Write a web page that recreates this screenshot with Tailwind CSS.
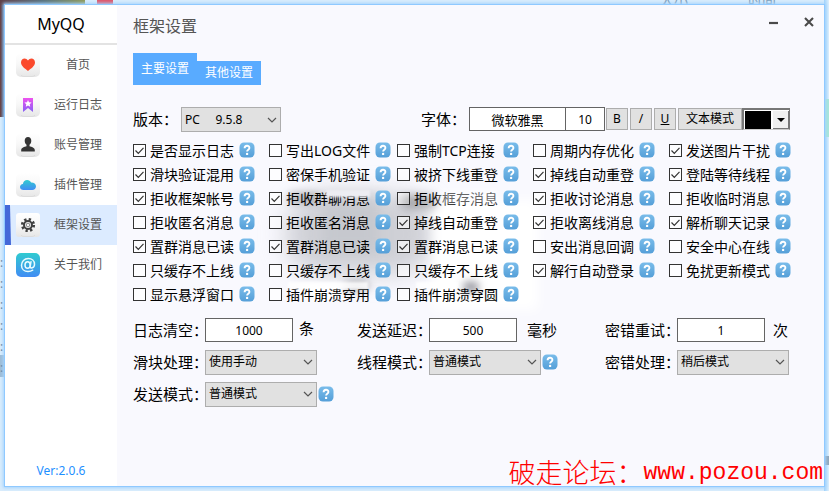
<!DOCTYPE html>
<html lang="zh-CN">
<head>
<meta charset="utf-8">
<title>MyQQ 框架设置</title>
<script src="https://cdn.jsdelivr.net/npm/@tailwindcss/browser@4"></script>
</head>
<body class="relative flex min-h-screen overflow-hidden bg-[#d9ecfc] p-[5px] font-['Noto_Sans','Noto_Sans_CJK_SC',sans-serif] text-black">

<!-- Desktop behind the window -->
<div class="absolute inset-0 overflow-hidden" aria-hidden="true">
  <div class="absolute top-0 left-0 h-[117px] w-[5px] bg-gradient-to-r from-[#6b3a38] to-[#2f5684]"></div>
  <div class="absolute top-0 left-0 h-[5px] w-[85px] bg-gradient-to-r from-[#5e3f48] via-[#56707c] to-[#8f9a58]"></div>
  <div class="absolute top-0 left-[97px] h-1 w-4 bg-[#e0566a]"></div>
  <div class="absolute top-0 right-0 bottom-0 w-[5px] bg-gradient-to-r from-[#9fd2fb] to-[#dff0fd]"></div>
  <div class="absolute right-0 top-[99px] h-[38px] w-1 bg-[#a8e6d8]"></div>
  <div class="absolute right-0 top-[456px] h-[9px] w-[5px] bg-[#8ea5ba]"></div>
  <div class="absolute left-0 top-[355px] h-[22px] w-[5px] bg-[#9dbcd6]"></div>
  <div class="absolute -top-2 left-[660px] text-[14px] leading-4 text-[#7c9db8]">大小</div>
  <div class="absolute -top-2 left-[748px] text-[14px] leading-4 text-[#7c9db8]">时间</div>
  <div class="absolute top-[252px] left-0 text-[12px] leading-[21px] text-[#5f7c98]">:<br>:<br>:<br>:<br>:<br>:</div>
</div>

<div class="relative flex flex-1 bg-[#f9f9fe] shadow-[0_0_0_1px_#8fc9ff,0_0_3px_2px_#a5d4fd]">

  <!-- Sidebar -->
  <aside class="flex w-28 shrink-0 flex-col bg-white">
    <h1 class="flex h-10 items-center justify-center border-b-2 border-[#e3e3e3] text-[16px]">MyQQ</h1>
    <nav class="flex flex-col text-[12px] text-[#555]">
      <a href="#" class="flex h-10 items-center gap-3.5 pl-[11px]">
        <svg class="size-6" viewBox="0 0 24 24"><defs><linearGradient id="tile" x2="0" y2="1"><stop stop-color="#fff"/><stop offset=".45" stop-color="#f8f8f8"/><stop offset="1" stop-color="#e6e6e6"/></linearGradient></defs><rect width="24" height="24" rx="5" fill="url(#tile)"/><path d="M5 22q1 1.500 3 1.500h8q2 0 3-1.500" fill="none" stroke="#dcdcdc"/><path d="M12 18C9 15.500 5 13 5 9.500 5 5 10 4 12 7.500 14 4 19 5 19 9.500 19 13 15 15.500 12 18z" fill="#fb4a2d"/></svg>
        <span class="w-12 text-center">首页</span>
      </a>
      <a href="#" class="flex h-10 items-center gap-3.5 pl-[11px]">
        <svg class="size-6" viewBox="0 0 24 24"><defs><linearGradient id="mark" x2="0" y2="1"><stop stop-color="#ee52ee"/><stop offset="1" stop-color="#8560f6"/></linearGradient></defs><rect width="24" height="24" rx="5" fill="url(#tile)"/><path d="M5 22q1 1.500 3 1.500h8q2 0 3-1.500" fill="none" stroke="#dcdcdc"/><path d="M7 5h10v14l-5-4-5 4z" fill="url(#mark)"/><path d="m12 7 1 2.300 2.600.3-1.900 1.700.5 2.500-2.200-1.300-2.200 1.300.5-2.500-1.900-1.700 2.600-.3z" fill="#fff"/></svg>
        <span class="w-12 text-center">运行日志</span>
      </a>
      <a href="#" class="flex h-10 items-center gap-3.5 pl-[11px]">
        <svg class="size-6" viewBox="0 0 24 24"><rect width="24" height="24" rx="5" fill="url(#tile)"/><path d="M5 22q1 1.500 3 1.500h8q2 0 3-1.500" fill="none" stroke="#dcdcdc"/><path d="M12 4c2 0 3.300 1.500 3.300 3.800 0 1.800-.8 3.200-1.800 4v1.400c2 .8 5.300 1.200 5.300 3.800v1.500H5.200V17c0-2.600 3.300-3 5.300-3.800v-1.400c-1-.8-1.800-2.200-1.800-4C8.700 5.500 10 4 12 4z" fill="#343434"/></svg>
        <span class="w-12 text-center">账号管理</span>
      </a>
      <a href="#" class="flex h-10 items-center gap-3.5 pl-[11px]">
        <svg class="size-6" viewBox="0 0 24 24"><defs><linearGradient id="blue" x2="0" y2="1"><stop stop-color="#30cbd0"/><stop offset="1" stop-color="#418cf4"/></linearGradient></defs><rect width="24" height="24" rx="5" fill="url(#tile)"/><path d="M5 22q1 1.500 3 1.500h8q2 0 3-1.500" fill="none" stroke="#dcdcdc"/><path d="M7.500 17C5.500 17 4 15.700 4 14c0-1.600 1.200-2.800 2.900-3C7.300 8.600 9 7 11.200 7c1.700 0 3.200 1 3.900 2.400 2.600-.2 4.900 1.400 4.900 3.900 0 2.100-1.600 3.700-3.800 3.700z" fill="url(#blue)"/></svg>
        <span class="w-12 text-center">插件管理</span>
      </a>
      <a href="#" aria-current="page" class="relative flex h-10 items-center gap-3.5 bg-[#dcebff] pl-[11px]">
        <svg class="absolute inset-y-0 left-0 h-10 w-1.5" viewBox="0 0 6 40"><path d="M0 0h5l1 40H0z" fill="#4468d8"/></svg>
        <svg class="size-6" viewBox="0 0 24 24"><rect width="24" height="24" rx="3" fill="url(#tile)"/><path d="M5 22q1 1.500 3 1.500h8q2 0 3-1.500" fill="none" stroke="#dcdcdc"/><g fill="none" stroke="#414141"><circle cx="12" cy="12" r="5.700" stroke-width="2.800" stroke-dasharray="2.240 2.240"/><circle cx="12" cy="12" r="4" stroke-width="2"/><circle cx="12" cy="12" r="1.800" stroke="#888" stroke-width="1"/></g></svg>
        <span class="w-12 text-center">框架设置</span>
      </a>
      <a href="#" class="flex h-10 items-center gap-3.5 pl-[11px]">
        <svg class="size-6" viewBox="0 0 24 24"><rect width="24" height="24" rx="5" fill="url(#blue)"/><g fill="none" stroke="#e8fbff" stroke-width="1.500" stroke-linecap="round"><ellipse cx="11.600" cy="12" rx="2.600" ry="3.300"/><path d="M15 8.700 14.200 13.500c-.3 2.400 4.300 1.900 4.300-2.300C18.500 7.600 15.800 5.500 12.300 5.500 8.400 5.500 5.500 8.400 5.500 12.200c0 3.900 2.700 6.300 6.500 6.300 1.900 0 3.400-.4 4.700-1.300"/></g></svg>
        <span class="w-12 text-center">关于我们</span>
      </a>
    </nav>
    <p class="mt-auto pb-1.5 text-center text-[12px] leading-[18px] text-[#1e8fff]">Ver:2.0.6</p>
  </aside>

  <!-- Settings -->
  <main class="flex min-w-0 flex-1 flex-col pr-[19px] pl-4">
    <header class="mb-1.5 flex h-[42px] items-center justify-between text-[#555]">
      <h2 class="text-[16px]">框架设置</h2>
      <div class="-mr-3.5 flex gap-4 pb-2">
        <button aria-label="最小化" class="grid size-5 place-items-center"><svg class="size-3" viewBox="0 0 12 12"><path d="M2 7h9" stroke="#4a4a4a" stroke-width="2.200"/></svg></button>
        <button aria-label="关闭" class="grid size-5 place-items-center"><svg class="size-3" viewBox="0 0 12 12"><path d="m2 2 8 8m0-8-8 8" stroke="#4a4a4a" stroke-width="2.100"/></svg></button>
      </div>
    </header>

    <div class="flex h-8 items-end text-[12px] text-white" role="tablist">
      <button role="tab" aria-selected="true" class="h-8 w-16 bg-[#59abff]">主要设置</button>
      <button role="tab" aria-selected="false" class="h-6 w-16 bg-[#59abff]">其他设置</button>
    </div>

    <div class="mt-[22px] grid h-[25px] grid-cols-[36fr_48fr] text-[15px]">
      <div class="flex items-center">
        <label for="version" class="w-12 whitespace-nowrap">版本：</label>
        <div class="grid h-[25px] w-[100px] items-center">
          <select id="version" class="col-start-1 row-start-1 h-full w-full appearance-none border border-[#adadad] bg-[#e1e1e1] pl-[3px] text-[12px]"><option>PC&nbsp;&nbsp;&nbsp;&nbsp;&nbsp;9.5.8</option></select>
          <svg class="pointer-events-none col-start-1 row-start-1 mr-1 h-2 w-2.5 justify-self-end" viewBox="0 0 10 8"><path d="m1 2 4 4 4-4" fill="none" stroke="#555" stroke-width="1.200"/></svg>
        </div>
      </div>
      <div class="flex items-center pb-px text-[12px]">
        <label for="font" class="w-12 shrink-0 text-[15px] whitespace-nowrap">字体：</label>
        <input id="font" value="微软雅黑" class="h-6 w-[97px] border border-[#646464] bg-white text-center text-[13px]">
        <input aria-label="字号" value="10" class="-ml-px h-6 w-10 border border-[#646464] bg-white text-center">
        <div class="ml-px flex gap-0.5">
          <button class="h-[22px] w-[22px] border border-[#adadad] bg-[#e1e1e1] leading-5">B</button>
          <button class="h-[22px] w-[22px] border border-[#adadad] bg-[#e1e1e1] leading-5">/</button>
          <button class="h-[22px] w-[22px] border border-[#adadad] bg-[#e1e1e1] leading-5 underline">U</button>
          <button class="h-[22px] w-16 border border-[#adadad] bg-[#e1e1e1] leading-5">文本模式</button>
        </div>
        <button aria-label="文字颜色" class="flex h-[22px] w-12 border-t-2 border-r border-b border-l-2 border-t-[#777] border-r-[#777] border-b-[#ccc] border-l-[#777] bg-white pt-px pl-px">
          <span class="h-[18px] w-[26px] bg-black"></span>
          <span class="ml-0.5 grid h-[18px] flex-1 place-items-center border-r border-b border-[#777] bg-[#f0f0f0]"><svg class="h-1 w-2" viewBox="0 0 8 4"><path d="M0 0h8L4 4z"/></svg></span>
        </button>
      </div>
    </div>

    <div class="relative mt-1.5">
      <!-- Soft smudges behind and over the middle options -->
      <div class="absolute top-[56px] left-[152px] h-20 w-[150px] rounded-full bg-[#c4c6cc]/80 blur-[12px]"></div>
      <div class="absolute top-[58px] left-[190px] h-14 w-[56px] bg-[#c2c4ca]/70 blur-[7px]"></div>
      <div class="absolute top-[62px] left-[300px] h-[110px] w-[105px] bg-white blur-[6px]"></div>
      <div class="absolute top-[146px] left-[165px] h-4 w-[45px] rounded-full bg-white blur-[3px]"></div>
      <div id="options" class="relative grid grid-cols-[17fr_16fr_17fr_17fr_17fr] text-[14px]"></div>
      <div class="pointer-events-none absolute top-[52px] left-[193px] h-[7px] w-11 bg-[#ededf2] blur-[1px]"></div>
      <div class="pointer-events-none absolute top-[55px] left-[155px] h-2.5 w-8 rounded-full bg-black/25 blur-[4px]"></div>
      <div class="pointer-events-none absolute top-[57px] left-[268px] h-3.5 w-9 rounded-full bg-black/25 blur-[5px]"></div>
      <div class="pointer-events-none absolute top-[51px] left-[305px] h-4 w-[60px] bg-white/40 blur-[2px]"></div>
      <div class="pointer-events-none absolute top-[143px] left-[212px] h-2.5 w-6 rounded-full bg-black/25 blur-[4px]"></div>
      <div class="pointer-events-none absolute top-[144px] left-[330px] h-2.5 w-4 rounded-full bg-[#223]/50 blur-[4px]"></div>
      <div class="pointer-events-none absolute top-[144px] left-[155px] h-[7px] w-20 bg-white/80 blur-[1px]"></div>
      <div class="pointer-events-none absolute top-[144px] left-[283px] h-[7px] w-[42px] bg-white/80 blur-[1px]"></div>
    </div>

    <div class="mt-2 grid grid-cols-[28fr_31fr_25fr] text-[15px] whitespace-nowrap">
      <div class="flex h-8 items-center">
        <label for="clear" class="w-[72px]">日志清空：</label>
        <input id="clear" value="1000" class="h-6 w-[88px] border border-[#646464] bg-white text-center text-[12px]"><span class="ml-1.5 pb-1">条</span>
      </div>
      <div class="flex h-8 items-center">
        <label for="delay" class="w-[72px]">发送延迟：</label>
        <input id="delay" value="500" class="h-6 w-[88px] border border-[#646464] bg-white text-center text-[12px]"><span class="ml-2.5">毫秒</span>
      </div>
      <div class="flex h-8 items-center">
        <label for="retry" class="w-[72px]">密错重试：</label>
        <input id="retry" value="1" class="h-6 w-[88px] border border-[#646464] bg-white text-center text-[12px]"><span class="ml-2">次</span>
      </div>
      <div class="flex h-8 items-center">
        <label for="slider" class="w-[72px]">滑块处理：</label>
        <div class="grid h-[25px] w-28 items-center">
          <select id="slider" class="col-start-1 row-start-1 h-full w-full appearance-none border border-[#adadad] bg-[#e1e1e1] pl-[3px] text-[12px]"><option>使用手动</option></select>
          <svg class="pointer-events-none col-start-1 row-start-1 mr-1 h-2 w-2.5 justify-self-end" viewBox="0 0 10 8"><path d="m1 2 4 4 4-4" fill="none" stroke="#555" stroke-width="1.200"/></svg>
        </div>
      </div>
      <div class="flex h-8 items-center">
        <label for="thread" class="w-[72px]">线程模式：</label>
        <div class="grid h-[25px] w-28 items-center">
          <select id="thread" class="col-start-1 row-start-1 h-full w-full appearance-none border border-[#adadad] bg-[#e1e1e1] pl-[3px] text-[12px]"><option>普通模式</option></select>
          <svg class="pointer-events-none col-start-1 row-start-1 mr-1 h-2 w-2.5 justify-self-end" viewBox="0 0 10 8"><path d="m1 2 4 4 4-4" fill="none" stroke="#555" stroke-width="1.200"/></svg>
        </div>
        <span data-help class="ml-px"></span>
      </div>
      <div class="flex h-8 items-center">
        <label for="fail" class="w-[72px]">密错处理：</label>
        <div class="grid h-[25px] w-28 items-center">
          <select id="fail" class="col-start-1 row-start-1 h-full w-full appearance-none border border-[#adadad] bg-[#e1e1e1] pl-[3px] text-[12px]"><option>稍后模式</option></select>
          <svg class="pointer-events-none col-start-1 row-start-1 mr-1 h-2 w-2.5 justify-self-end" viewBox="0 0 10 8"><path d="m1 2 4 4 4-4" fill="none" stroke="#555" stroke-width="1.200"/></svg>
        </div>
      </div>
      <div class="flex h-8 items-center">
        <label for="send" class="w-[72px]">发送模式：</label>
        <div class="grid h-[25px] w-28 items-center">
          <select id="send" class="col-start-1 row-start-1 h-full w-full appearance-none border border-[#adadad] bg-[#e1e1e1] pl-[3px] text-[12px]"><option>普通模式</option></select>
          <svg class="pointer-events-none col-start-1 row-start-1 mr-1 h-2 w-2.5 justify-self-end" viewBox="0 0 10 8"><path d="m1 2 4 4 4-4" fill="none" stroke="#555" stroke-width="1.200"/></svg>
        </div>
        <span data-help class="ml-px"></span>
      </div>
    </div>
  </main>
</div>

<!-- Forum watermark -->
<p class="absolute right-1.5 bottom-0 flex items-center text-[27px] leading-9 font-light whitespace-nowrap text-[#f00]">破走论坛：<span class="font-['Liberation_Mono',monospace] text-[23px] font-normal">www.pozou.com</span></p>

<script>
const help = `<button type="button" aria-label="帮助" class="block size-4"><svg class="size-4" viewBox="0 0 16 16"><defs><linearGradient id="helpFill" x2="0" y2="1"><stop stop-color="#79bcea"/><stop offset="1" stop-color="#559fd8"/></linearGradient></defs><rect x=".5" y=".5" width="15" height="15" rx="4.500" fill="url(#helpFill)"/><path d="M5.600 6.200C5.600 3 10.400 3 10.400 6c0 1.800-2.300 1.700-2.300 3.500" fill="none" stroke="#fff" stroke-width="1.900"/><circle cx="8.100" cy="11.900" r="1.200" fill="#fff"/></svg></button>`;
const rows = [
  ["+是否显示日志", "-写出LOG文件", "-强制TCP连接", "-周期内存优化", "+发送图片干扰"],
  ["+滑块验证混用", "-密保手机验证", "-被挤下线重登", "+掉线自动重登", "+登陆等待线程"],
  ["+拒收框架帐号", "+拒收群聊消息", "-拒收框存消息", "+拒收讨论消息", "-拒收临时消息"],
  ["-拒收匿名消息", "-拒收匿名消息", "+掉线自动重登", "+拒收离线消息", "+解析聊天记录"],
  ["+置群消息已读", "+置群消息已读", "+置群消息已读", "-安出消息回调", "-安全中心在线"],
  ["-只缓存不上线", "-只缓存不上线", "-只缓存不上线", "+解行自动登录", "-免扰更新模式"],
  ["-显示悬浮窗口", "-插件崩溃穿用", "-插件崩溃穿圆"],
];
document.getElementById("options").innerHTML = rows.flat().map(o => `
  <div class="flex h-6 items-center">
    <label class="flex w-[106px] items-center gap-1 whitespace-nowrap">
      <span class="grid shrink-0">
        <input type="checkbox" class="peer col-start-1 row-start-1 size-[13px] appearance-none border border-[#333] bg-white/60" ${o[0] === "+" ? "checked" : ""}>
        <svg class="pointer-events-none invisible col-start-1 row-start-1 size-[13px] peer-checked:visible" viewBox="0 0 13 13"><path d="m2.500 6.500 2.800 2.800 5.200-5.500" fill="none" stroke="#333" stroke-width="1.200"/></svg>
      </span>${o.slice(1)}</label>${help}
  </div>`).join("");
document.querySelectorAll("[data-help]").forEach(e => { e.innerHTML = help; });
</script>
</body>
</html>
